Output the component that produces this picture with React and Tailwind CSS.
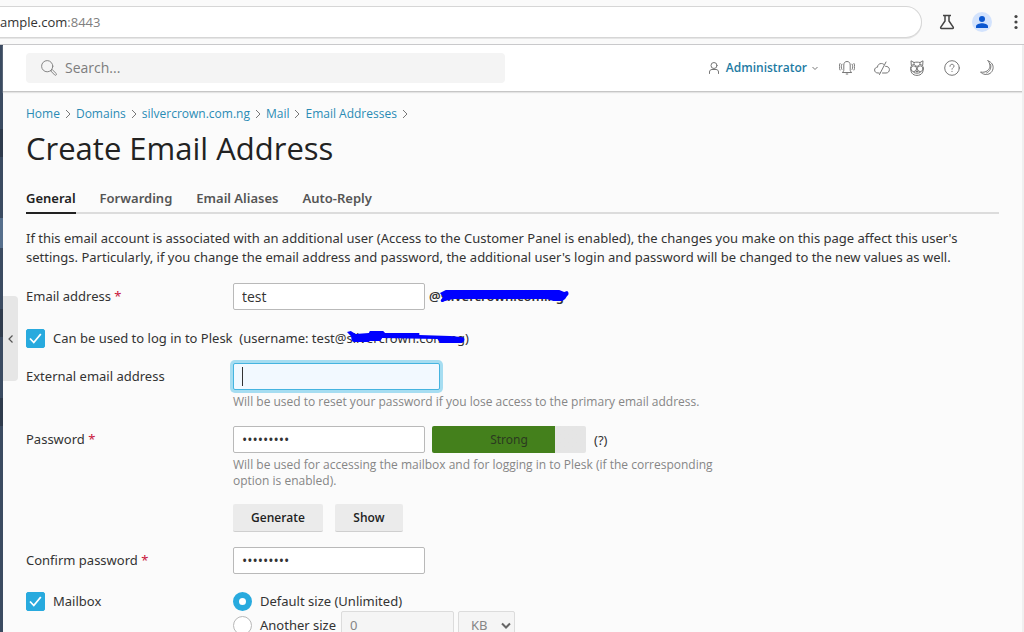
import React from "react";

const crumbs = ["Home", "Domains", "silvercrown.com.ng", "Mail", "Email Addresses"];
const tabs = ["General", "Forwarding", "Email Aliases", "Auto-Reply"];

function Icon({ children }) {
  return (
    <svg
      className="block size-4 shrink-0"
      viewBox="0 0 16 16"
      fill="none"
      stroke="currentColor"
      strokeWidth="1"
      strokeLinecap="round"
      strokeLinejoin="round"
      aria-hidden="true"
    >
      {children}
    </svg>
  );
}

function BrowserBar() {
  return (
    <div className="flex h-[45px] shrink-0 items-start border-b border-[#c9c9cb] bg-[#fafafa] pt-1.5">
      <div className="flex h-8 min-w-0 flex-1 items-center rounded-r-full border border-l-0 border-[#d6d6d6] bg-white shadow-[0_1px_0_#e6e6e6]">
        <span className="font-['Open_Sans',sans-serif] text-[13px] text-[#333]">
          ample.com<span className="text-[#808080]">:8443</span>
        </span>
      </div>
      <div className="flex h-8 items-center">
        <button aria-label="Labs" className="ml-[17px] flex size-4 items-center justify-center text-[#444]">
          <svg className="size-4" viewBox="0 0 16 16" fill="none" stroke="currentColor" strokeWidth="1.5" strokeLinejoin="round">
            <path d="M4 1.600h8M6 1.600V7L1.800 13.200c-.4.6 0 1.200.6 1.200h11.200c.6 0 1-.6.6-1.200L10 7V1.600" />
          </svg>
        </button>
        <button aria-label="Profile" className="ml-[17px] flex size-5 items-center justify-center rounded-full bg-[#d3e3fd] text-[#0b57d0]">
          <svg className="size-3" viewBox="0 0 12 12" fill="currentColor">
            <circle cx="6" cy="3" r="3" />
            <path d="M0 12v-1.800C0 8.200 3.600 7.200 6 7.200s6 1 6 3V12z" />
          </svg>
        </button>
        <button aria-label="Browser menu" className="ml-4 flex h-5 w-4 items-center justify-center text-[#444]">
          <svg className="h-4 w-1" viewBox="0 0 4 16" fill="currentColor">
            <circle cx="2" cy="2.500" r="1.600" />
            <circle cx="2" cy="8" r="1.600" />
            <circle cx="2" cy="13.500" r="1.600" />
          </svg>
        </button>
      </div>
    </div>
  );
}

function SidebarEdge() {
  return (
    <div className="flex w-[3px] shrink-0 flex-col bg-[#3b4b61]">
      <div className="h-[84px]" />
      <div className="h-7 bg-[#2f3b4c]" />
      <div className="h-[61px]" />
      <div className="h-[30px] bg-[#566f8c]" />
      <div className="h-[61px]" />
      <div className="h-7 bg-[#2f3b4c]" />
      <div className="h-[61px]" />
      <div className="h-7 bg-[#2f3b4c]" />
    </div>
  );
}

function Header() {
  return (
    <header className="flex h-[47px] shrink-0 items-center border-b border-[#c6c6c6] bg-white pr-[27px] pl-[23px] shadow-[0_1px_1px_#e4e4e4]">
      <label className="flex h-[30px] w-[479px] items-center gap-2 rounded-sm bg-[#f4f4f4] pl-[15px] text-[#868686]">
        <Icon>
          <circle cx="6.200" cy="6.200" r="5.600" />
          <path d="M10.400 10.300l.9-.6 4 3.900c.8.8-.6 2.300-1.500 1.500l-3.900-4z" />
        </Icon>
        <input
          aria-label="Search"
          placeholder="Search..."
          className="min-w-0 flex-1 bg-transparent font-['Open_Sans',sans-serif] text-sm text-[#333] outline-none placeholder:text-[#7d7d7d]"
        />
      </label>
      <div className="ml-auto flex items-center text-[#777]">
        <button className="flex items-center gap-1 font-['Open_Sans',sans-serif] text-xs font-semibold text-[#1d7ba3]">
          <span className="text-[#777]">
            <Icon>
              <circle cx="8" cy="5.500" r="3" />
              <path d="M3.500 13.500v-1.500c0-1.500 1-2.500 2.500-2.500h4c1.500 0 2.500 1 2.500 2.500v1.500" />
            </Icon>
          </span>
          Administrator
          <svg className="size-2 text-[#777]" viewBox="0 0 8 8" fill="none" stroke="currentColor" aria-hidden="true">
            <path d="M1.500 3L4 5.500 6.500 3" />
          </svg>
        </button>
        <div className="ml-5 flex gap-[19px]">
          <button aria-label="Notifications">
            <Icon>
              <path d="M3.600 12.300c.9-.6 1.200-1.300 1.200-2.500V5C4.800 2.800 6 1.500 8 1.500s3.200 1.300 3.200 3.500v4.800c0 1.200.3 1.900 1.200 2.500zM7.200 14h1.600M2.900 4.200c-.9 1.600-.9 3.600 0 5.200M1 3.500C0 5.500 0 8 1 10M13.100 4.200c.9 1.600.9 3.600 0 5.200M15 3.500c1 2 1 4.500 0 6.500" />
            </Icon>
          </button>
          <button aria-label="Cloud">
            <Icon>
              <path d="M5.200 13H4C2 13 .6 11.800.6 10c0-1.600 1.200-2.800 2.900-2.800C3.500 5 5.200 3.500 7.300 3.500c.9 0 1.700.2 2.300.7M11.600 6.300c2.200-.1 3.800 1.200 3.800 3.300 0 2-1.400 3.400-3.400 3.400H8.500M12 2L5.500 14.500" />
            </Icon>
          </button>
          <button aria-label="Advisor">
            <Icon>
              <path d="M2.300 5L2 .8l3 1.700c1.800-.5 4.200-.5 6 0l3-1.700L13.700 5M1.700 7c-.6 5.300 1.800 8.400 6.300 8.400s6.900-3.100 6.300-8.400M4.800 12.500c1.800 1 4.600 1 6.400 0" />
              <circle cx="4.800" cy="8.700" r="2.900" />
              <circle cx="11.200" cy="8.700" r="2.900" />
              <path d="M7 10.800l1 1.400 1-1.400M5 2.500c-.3 1.800.8 2.800 3 4 2.200-1.200 3.300-2.200 3-4M2.500 5.500l2-1M13.500 5.500l-2-1" />
            </Icon>
          </button>
          <button aria-label="Help">
            <Icon>
              <circle cx="8" cy="8" r="7.300" />
              <path d="M6 6.300c0-1.200.8-2 2-2s2 .8 2 1.900c0 1.400-2 1.500-2 3M8 11.300v.3" />
            </Icon>
          </button>
          <button aria-label="Dark mode">
            <Icon>
              <path d="M9 .8c3.800 1.400 5.700 4.500 5 8-.8 4-4.200 6.200-7.900 5.600-2-.3-3.700-1.200-4.600-2.400 3 .7 6.300 0 8.200-2.500C11.600 6.900 11.300 3.500 9 .8zM11.600 4.500c1 3.500-.6 7-4 8.500" />
            </Icon>
          </button>
        </div>
      </div>
    </header>
  );
}

function FormRow({ id, label, required, children }) {
  return (
    <div className="grid grid-cols-[207px_minmax(0,1fr)] items-start">
      <label htmlFor={id} className="pt-1">
        {label}
        {required && <span className="text-[#c8143c]"> *</span>}
      </label>
      <div>{children}</div>
    </div>
  );
}

function CheckBox({ id }) {
  return (
    <span className="grid size-[19px] shrink-0">
      <input
        id={id}
        type="checkbox"
        defaultChecked
        className="peer col-start-1 row-start-1 size-full appearance-none rounded-xs border border-[#b8b8b8] bg-white checked:border-[#28aade] checked:bg-[#28aade]"
      />
      <svg
        className="pointer-events-none col-start-1 row-start-1 hidden size-full peer-checked:block"
        viewBox="0 0 19 19"
        fill="none"
        stroke="#fff"
        strokeWidth="1.800"
        aria-hidden="true"
      >
        <path d="M4 9.500l3.800 4L14.800 5" />
      </svg>
    </span>
  );
}

const field = "h-[27px] w-48 rounded-xs border border-[#b9b9b9] bg-white px-2 font-['Open_Sans',sans-serif] text-sm text-[#333] outline-none";
const hint = "max-w-[480px] font-['Open_Sans',sans-serif] text-xs leading-4 text-[#868686]";
const action =
  "h-7 rounded-xs border-b border-[#cfcfcf] bg-[#ebebeb] font-['Open_Sans',sans-serif] text-xs font-semibold text-[#222]";
const radio =
  "size-[19px] shrink-0 appearance-none rounded-full border border-[#b8b8b8] bg-white checked:border-[6px] checked:border-[#28aade]";

export default function App() {
  return (
    <div className="flex h-screen flex-col overflow-hidden bg-[#fbfbfb] font-['Noto_Sans','Open_Sans',sans-serif] text-[13px] leading-[19px] text-[#333]">
      <BrowserBar />
      <div className="flex min-h-0 flex-1">
        <SidebarEdge />
        <div className="relative flex min-w-0 flex-1 flex-col border-r-2 border-[#f0f0f0]">
          <Header />
          <button
            aria-label="Collapse sidebar"
            className="absolute top-[251px] left-0 flex h-[85px] w-[15px] items-center justify-center rounded-r bg-[#e6e6e6] text-[#555]"
          >
            <svg className="h-2.5 w-2" viewBox="0 0 8 10" fill="none" stroke="currentColor" strokeWidth="1.200" aria-hidden="true">
              <path d="M5.500 1.500L2 5l3.500 3.500" />
            </svg>
          </button>
          <main className="min-h-0 flex-1 overflow-hidden px-[23px]">
            <nav aria-label="Breadcrumb" className="mt-3 flex items-center font-['Open_Sans',sans-serif] text-xs leading-5 text-[#2a8bb5]">
              {crumbs.map((c) => (
                <React.Fragment key={c}>
                  <a href="#">{c}</a>
                  <svg className="mx-1 h-2.5 w-2 text-[#777]" viewBox="0 0 8 10" fill="none" stroke="currentColor" aria-hidden="true">
                    <path d="M2 1l4 4-4 4" />
                  </svg>
                </React.Fragment>
              ))}
            </nav>
            <h1 className="mt-1 font-['Open_Sans',sans-serif] text-[31px] leading-10 text-[#222]">
              Create Email Address
            </h1>
            <div role="tablist" className="mt-[17px] flex gap-6 border-b-2 border-[#dcdcdc] font-semibold text-[#555]">
              {tabs.map((t, i) => (
                <button
                  key={t}
                  role="tab"
                  aria-selected={i === 0}
                  className="-mb-0.5 h-[29px] border-b-2 border-transparent aria-selected:border-[#222] aria-selected:text-[#222]"
                >
                  {t}
                </button>
              ))}
            </div>
            <p className="mt-[15px]">
              If this email account is associated with an additional user (Access to the Customer Panel is enabled), the changes you make on this page affect this user's settings. Particularly, if you change the email address and password, the additional user's login and password will be changed to the new values as well.
            </p>
            <form className="mt-4" onSubmit={(e) => e.preventDefault()}>
              <FormRow id="email" label="Email address" required>
                <div className="flex items-center gap-1">
                  <input id="email" defaultValue="test" className={field} />
                  <span className="relative font-semibold">
                    @silvercrown.com.ng
                    <svg className="absolute top-0.5 left-2.5 h-4 w-[130px]" viewBox="0 0 134 16" preserveAspectRatio="none" fill="#00f" aria-hidden="true">
                      <path d="M1 4L7 1h117l5 2 3-1c2 1 2 4 0 5l-2 3-3 2h-9l-7-2H15l-9 2c-2 2-5 1-4-1l2-3z" />
                    </svg>
                  </span>
                </div>
              </FormRow>
              <div className="mt-[19px] flex items-start">
                <CheckBox id="login" />
                <label htmlFor="login" className="ml-2">
                  Can be used to log in to Plesk&nbsp; (username: test@
                  <span className="relative">
                    silvercrown.com.ng
                    <svg className="absolute top-0.5 left-0 h-3.5 w-[118px]" viewBox="0 0 124 14" preserveAspectRatio="none" fill="#00f" aria-hidden="true">
                      <path d="M0 1l4-1 5 3 14-1 1-2h14l2 2h36v2l32 1 12 1c5 0 4 5 0 6H98l-3-4-58-1-2 3H24l-1 1H7c-3-1-2-5-3-6z" />
                    </svg>
                  </span>
                  )
                </label>
              </div>
              <div className="mt-[15px]">
                <FormRow id="external" label="External email address">
                  <div className="relative w-[207px]">
                    <input
                      id="external"
                      className="block h-[27px] w-full rounded-xs border border-[#45b4e0] bg-[#f2f9ff] px-2 text-sm caret-transparent shadow-[0_0_0_3px_#a6ddf1] outline-none"
                    />
                    <span className="absolute top-1 left-[9px] h-[19px] w-px bg-[#333]" />
                  </div>
                  <p className={`${hint} mt-1`}>
                    Will be used to reset your password if you lose access to the primary email address.
                  </p>
                </FormRow>
              </div>
              <div className="mt-4">
                <FormRow id="password" label="Password" required>
                  <div className="flex items-center">
                    <input id="password" type="password" defaultValue="secret123" className={field} />
                    <div className="ml-[7px] flex h-[27px] w-[154px] items-center justify-center rounded-xs bg-linear-to-r from-[#44801c] from-80% to-[#e5e5e5] to-80% text-xs text-[#2b3a20]">
                      Strong
                    </div>
                    <button type="button" className="ml-2 pt-0.5">(?)</button>
                  </div>
                  <p className={`${hint} mt-1`}>
                    Will be used for accessing the mailbox and for logging in to Plesk (if the corresponding option is enabled).
                  </p>
                  <div className="mt-[15px] flex gap-3">
                    <button type="button" className={`${action} w-[90px]`}>Generate</button>
                    <button type="button" className={`${action} w-[68px]`}>Show</button>
                  </div>
                </FormRow>
              </div>
              <div className="mt-[15px]">
                <FormRow id="confirm" label="Confirm password" required>
                  <input id="confirm" type="password" defaultValue="secret123" className={`${field} block`} />
                </FormRow>
              </div>
              <div className="mt-[18px] grid grid-cols-[207px_minmax(0,1fr)] items-start">
                <div className="flex items-center gap-2">
                  <CheckBox id="mailbox" />
                  <label htmlFor="mailbox">Mailbox</label>
                </div>
                <div>
                  <label className="flex items-center gap-2">
                    <input type="radio" name="size" defaultChecked className={radio} />
                    Default size (Unlimited)
                  </label>
                  <div className="flex items-center">
                    <label className="flex items-center gap-2">
                      <input type="radio" name="size" className={radio} />
                      Another size
                    </label>
                    <input
                      aria-label="Mailbox size"
                      disabled
                      defaultValue="0"
                      className="ml-[5px] h-7 w-[113px] rounded-xs border border-[#dcdcdc] bg-[#f5f5f5] px-2 text-[13px] text-[#868686]"
                    />
                    <div className="relative ml-1">
                      <select
                        aria-label="Size unit"
                        disabled
                        className="block h-7 w-[57px] appearance-none rounded-xs border border-[#dcdcdc] bg-[#f5f5f5] pl-3 text-[13px] text-[#868686]"
                      >
                        <option>KB</option>
                        <option>MB</option>
                      </select>
                      <svg className="pointer-events-none absolute top-2.5 right-1 size-2.5 text-[#666]" viewBox="0 0 10 10" fill="none" stroke="currentColor" strokeWidth="2" aria-hidden="true">
                        <path d="M1 2.500l4 4 4-4" />
                      </svg>
                    </div>
                  </div>
                </div>
              </div>
            </form>
          </main>
        </div>
      </div>
    </div>
  );
}
